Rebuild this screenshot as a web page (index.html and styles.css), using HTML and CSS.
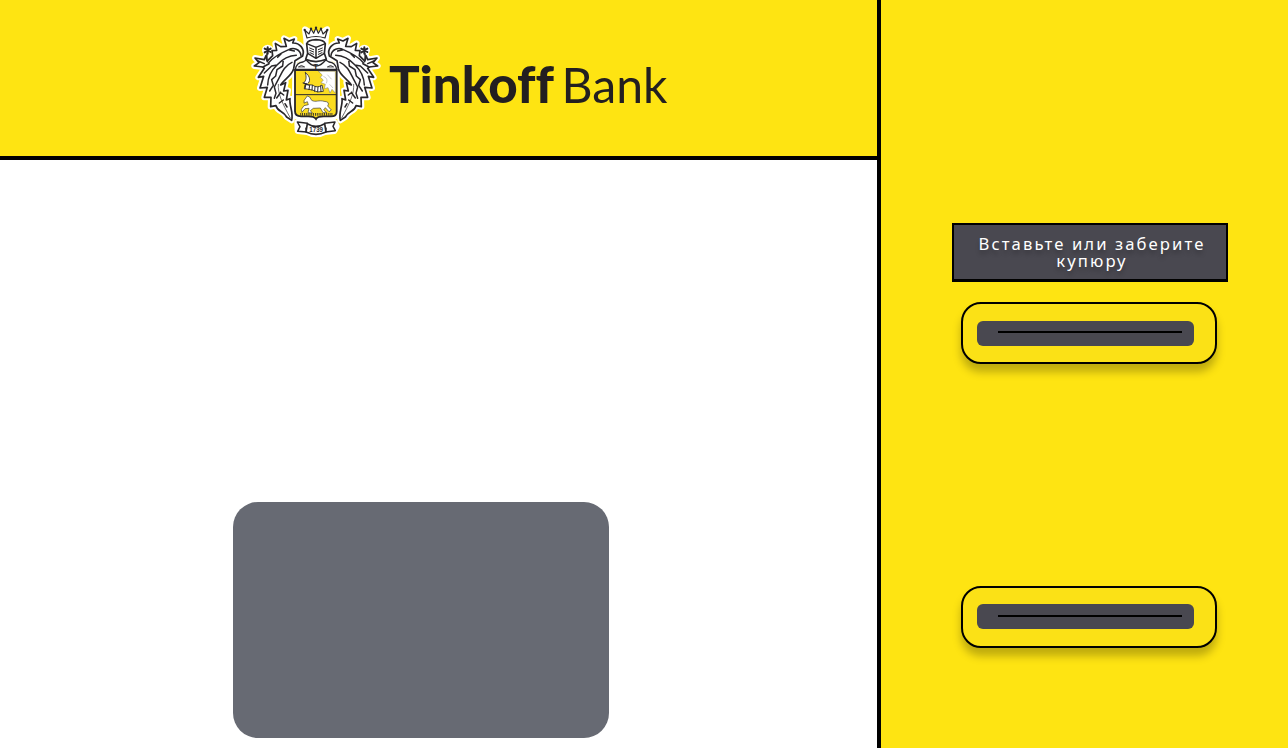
FILE: index.html
```html
<!DOCTYPE html>
<html lang="ru">
<head>
<meta charset="utf-8">
<title>Tinkoff Bank</title>
<link rel="stylesheet" href="styles.css">
</head>
<body>
<main class="atm">
  <section class="main-panel">
    <header class="header">
      <svg class="crest" viewBox="0 0 432 384" aria-label="Tinkoff">
        <defs>
          <g id="mantle">
            <path d="M176 120 C184 98 166 80 146 81 L151 69 L135 75 L120 67 L127 91 L110 92 L94 82 L98 103 L84 104 L86 119 L68 137 L54 151 L61 157 L43 184 L59 181 L48 216 L70 214 L61 244 L81 244 L80 272 L96 269 C101 288 118 284 128 303 L143 313 C149 288 135 269 138 248 L127 252 L132 223 L119 225 L125 200 L110 207 C121 188 143 180 149 158 L153 134 Z"/>
            <path d="M70 137 L66 119 L61 131 L33 126 L45 140 L31 150 L57 153 L75 143"/>
          </g>
          <g id="veins">
            <path d="M171 119 C169 99 148 94 134 101 C111 111 91 120 74 140 M157 118 C133 119 112 133 99 147 C83 162 72 180 71 207 M99 147 L83 150 L61 171 M118 131 L116 150 L99 161 L95 180 L83 191 L88 208 L77 225 M144 139 C119 150 112 174 101 194 L91 213 L96 232 L91 247 M110 229 L98 246 M118 252 L106 261 M123 263 L129 273 M109 229 L119 237 M134 101 L151 105 M111 114 L101 124"/>
            <path d="M69 113 L68 132 M42 135 L61 143"/>
          </g>
          <path id="midrib" d="M103 205 C101 233 114 260 139 306"/>
          <path id="silhouette" d="M216 60 L183 40 L187 71 L188 103 L181 136 L154 158 L152 288 Q153 306 183 307 L216 318 L249 307 Q279 306 280 288 L278 158 L251 136 L244 103 L245 71 L249 40 Z"/>
        </defs>
        <g class="halo">
          <use href="#mantle"/>
          <use href="#mantle" transform="matrix(-1 0 0 1 432 0)"/>
          <use href="#silhouette"/>
          <circle cx="71" cy="103" r="8"/><circle cx="361" cy="103" r="8"/>
          <path d="M160 319 L190 323 Q216 338 242 323 L272 319 L278 331 L271 345 L242 348 Q216 362 190 348 L161 345 Z"/>
        </g>
        <g class="leaf"><use href="#mantle"/><use href="#mantle" transform="matrix(-1 0 0 1 432 0)"/></g>
        <g class="vein"><use href="#veins"/><use href="#veins" transform="matrix(-1 0 0 1 432 0)"/></g>
        <g class="midrib"><use href="#midrib"/><use href="#midrib" transform="matrix(-1 0 0 1 432 0)"/></g>
        <path class="star" d="M71 94v19M62 98l18 10M62 109l18-11M361 94v19M352 98l18 10M352 109l18-11"/>
        <path class="scroll" d="M154 160 Q158 139 177 138 L187 132 Q216 168 245 132 L255 138 Q274 139 278 160 Z"/>
        <path class="fine" d="M164 152 Q172 144 181 152 Z M251 152 Q260 144 268 152 Z"/>
        <path class="leaf" d="M188 83 Q192 72 216 71 Q240 72 244 83 L241 112 L247 130 Q232 136 216 137 Q199 136 185 130 L191 112 Z"/>
        <path class="vein" d="M188 83 L216 94 L244 83 M216 94 V122 M191 112 L216 127 L241 112"/>
        <path class="visor" d="M197 96 L209 101 M197 103 L209 108 M198 110 L209 115 M235 96 L223 101 M235 103 L223 108 M234 110 L223 115"/>
        <path class="crown" d="M189 66 L182 42 L195 54 L201 38 L209 52 L216 35 L223 52 L231 38 L237 54 L250 42 L243 66 Q216 57 189 66 Z"/>
        <g class="ink"><circle cx="182" cy="42" r="3.5"/><circle cx="201" cy="38" r="3.5"/><circle cx="216" cy="35" r="3.5"/><circle cx="231" cy="38" r="3.5"/><circle cx="250" cy="42" r="3.5"/></g>
        <path class="shield" d="M153 162 H278 V287 Q278 301 261 301 H239 Q220 301 216 309 Q211 301 193 301 H171 Q153 301 153 286 Z"/>
        <path class="divider" d="M153 236 H278"/>
        <text class="initial" x="208" y="160">T</text>
        <path class="cloud" d="M223 166 H274 V231 L264 220 L258 231 L252 215 L241 218 L244 205 L231 200 L238 192 L229 184 L235 177 Z"/>
        <path class="fine" d="M184 170 C201 181 199 198 190 204 L179 201 C187 193 188 184 184 170 Z"/>
        <path class="fine" d="M184 206 L205 207 Q220 218 234 207 L238 226 Q220 232 205 222 L182 218 Z"/>
        <path class="arm" d="M177 201 L194 207 M186 202 L183 219 M197 207 L195 221 M205 208 L204 222 M213 212 L212 226 M222 213 L221 227 M230 210 L231 227"/>
        <path class="feather" d="M238 181 Q254 187 247 202 M250 176 L263 190 M257 205 L267 216"/>
        <path class="horse" d="M181 252 L190 240 L197 243 L203 253 C215 260 225 251 240 256 Q259 257 251 270 L262 282 L255 287 L244 275 L239 282 L248 290 L237 290 L229 276 L208 277 L199 284 L205 291 L192 290 L195 277 L183 278 L174 289 L172 280 L180 269 L193 266 L190 257 L181 261 Z"/>
        <path class="grass" d="M169 295 H265"/>
        <path class="vein" d="M190 322 L160 318 L168 332 L161 346 L188 348 L186 337 M242 322 L273 318 L267 331 L274 344 L244 348 L246 337"/>
        <path class="leaf" d="M190 323 Q216 339 242 323 L246 348 Q216 362 186 348 Z"/>
        <text class="year" x="196" y="349" textLength="41" lengthAdjust="spacingAndGlyphs">1739</text>
      </svg>
      <svg class="wordmark" viewBox="0 0 300 70">
        <text class="wordmark-bold" x="9" y="53" textLength="165" lengthAdjust="spacingAndGlyphs">Tinkoff</text>
        <text class="wordmark-light" x="181.5" y="53" textLength="106" lengthAdjust="spacingAndGlyphs">Bank</text>
      </svg>
    </header>
    <div class="workspace">
      <div class="screen"></div>
    </div>
  </section>
  <aside class="side-panel">
    <div class="notice">Вставьте или заберите купюру</div>
    <div class="slot"><div class="slot-mouth"><div class="slot-line"></div></div></div>
    <div class="slot slot-lower"><div class="slot-mouth"><div class="slot-line"></div></div></div>
  </aside>
</main>
</body>
</html>
```
FILE: styles.css
```css
* { box-sizing: border-box; }
body { margin: 0; overflow: hidden; font-family: "Noto Sans", sans-serif; }
.atm { display: flex; width: 1288px; height: 748px; background: #fee412; }
.main-panel { width: 881px; border-right: 4px solid #000; background: #fff; }
.header { display: flex; height: 160px; padding: 16px 0 0 244px; border-bottom: 4px solid #000; background: #fee412; }
.crest { flex: none; width: 144px; height: 128px; }
.wordmark { flex: none; width: 300px; height: 70px; margin: 34px 0 0 -8px; overflow: visible; fill: #231f20; }
.wordmark-bold { font: 900 51px Lato, sans-serif; font-variant-ligatures: none; }
.wordmark-light { font: 400 48px Lato, sans-serif; }
.halo { fill: #fff; stroke: #fff; stroke-width: 18; stroke-linejoin: round; }
.leaf, .vein, .midrib, .fine, .horse, .star, .scroll, .visor, .arm, .crown { stroke: #29272a; stroke-linejoin: round; stroke-linecap: round; }
.leaf { fill: #fff; stroke-width: 5; }
.vein { fill: none; stroke-width: 4.5; }
.midrib { fill: none; stroke-width: 2; }
.crown { fill: #fff; stroke-width: 3.5; }
.fine { fill: #fff; stroke-width: 2.5; }
.horse { fill: #fff; stroke-width: 1.8; }
.scroll { fill: #fff; stroke-width: 4; }
.visor, .arm { fill: none; stroke-width: 3; }
.star { fill: none; stroke-width: 6; }
.ink { fill: #29272a; }
.shield { fill: #fbdc20; stroke: #29272a; stroke-width: 5.5; }
.divider { fill: none; stroke: #29272a; stroke-width: 3; }
.cloud { fill: #fff; stroke: #777; stroke-width: 1.5; }
.feather { fill: none; stroke: #999; stroke-width: 1.5; }
.grass { fill: none; stroke: #29272a; stroke-width: 8; stroke-dasharray: 2.5 3; }
.initial { font: 700 24px "Liberation Sans", sans-serif; fill: #29272a; }
.year { font: 700 20px "Liberation Sans", sans-serif; fill: #29272a; }
.workspace { display: flex; height: 588px; padding: 342px 0 0 233px; }
.screen { width: 376px; height: 236px; border-radius: 25px; background: #676a73; }
.side-panel { display: flex; flex-direction: column; width: 407px; padding: 223px 0 0 71px; }
.notice { width: 276px; height: 59px; padding: 10px 20px 0 24px; border: 2px solid #000; border-bottom-width: 3px; background: #494850; color: #fff; font-size: 16.67px; line-height: 17px; letter-spacing: 2.08px; text-align: center; text-shadow: 0 4px 4px rgba(0, 0, 0, .25); }
.slot { width: 256px; height: 62px; margin: 20px 0 0 9px; padding: 17px 0 0 14px; border: 2px solid #000; border-radius: 20px; background: #fbe116; box-shadow: 0 8px 8px rgba(0, 0, 0, .25); }
.slot-lower { margin-top: 222px; padding-top: 16px; }
.slot-mouth { width: 217px; height: 25px; padding: 10px 12px 0 21px; border-radius: 6px; background: #494850; }
.slot-lower .slot-mouth { padding-top: 11px; }
.slot-line { height: 2px; background: #000; }
```
